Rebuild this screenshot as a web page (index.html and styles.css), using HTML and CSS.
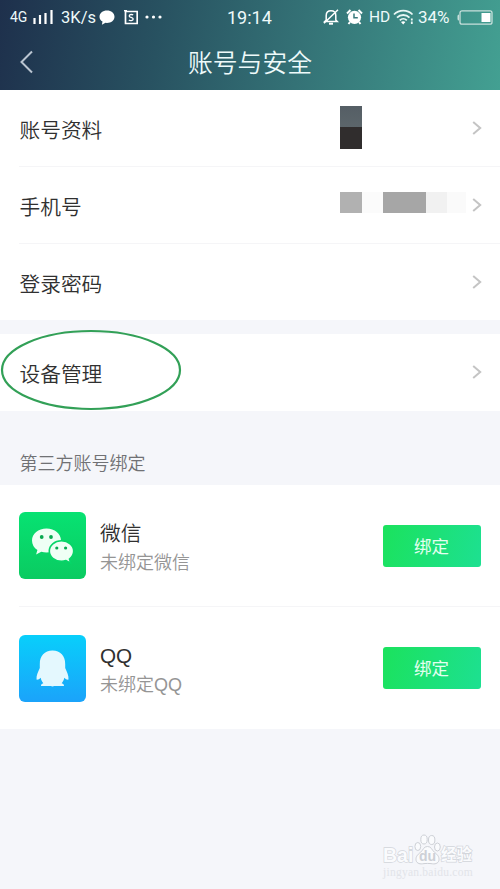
FILE: index.html
```html
<!DOCTYPE html>
<html lang="zh-CN">
<head>
<meta charset="utf-8">
<title>账号与安全</title>
<link rel="stylesheet" href="styles.css">
</head>
<body>
<header class="header">
  <div class="status">
    <span class="net">4G</span>
    <svg class="signal" width="20" height="16" viewBox="0 0 20 16"><path d="M1.500 15V9M7 15V6M12.500 15V4M18.500 15V1" stroke="#fff" stroke-width="2.200"/></svg>
    <span class="speed">3K/s</span>
    <svg class="bubble" width="16" height="15" viewBox="0 0 16 15"><path d="M8 .5c4.300 0 7.500 2.700 7.500 6.200s-3.200 6.200-7.500 6.200l-1.500-.1-3.600 2 .6-3.200C1.600 10.500.5 8.700.5 6.700.5 3.200 3.700.5 8 .5z" fill="#fff"/></svg>
    <svg class="sbox" width="14" height="15" viewBox="0 0 14 15" fill="none" stroke="#fff"><path d="M1.500 1.500h11.700v12H1.500z" stroke-width="1.700"/><path d="M0 .7h3" stroke-width="1.400"/><path d="M9.100 5.100C8.500 4.300 5.200 4 5.200 6c0 1.800 4 1.100 4 3 0 2-3.500 1.800-4.300.8" stroke-width="1.300"/></svg>
    <svg class="dots" width="17" height="4" viewBox="0 0 17 4" fill="#fff"><circle cx="2" cy="2" r="1.600"/><circle cx="8.500" cy="2" r="1.600"/><circle cx="15" cy="2" r="1.600"/></svg>
    <span class="time">19:14</span>
    <svg class="bell" width="16" height="16" viewBox="0 0 16 16" fill="none" stroke="#fff" stroke-width="1.500"><path d="M3.200 11V6.500C3.200 3.200 5 1.700 8 1.700s4.800 1.500 4.800 4.800V11l1.500 1.500H1.700L3.200 11zM15 .8L1 14.300"/><path d="M6 14.700h4" stroke-width="2"/></svg>
    <svg class="alarm" width="17" height="16" viewBox="0 0 17 16"><circle cx="8.500" cy="8.300" r="6.600" fill="#fff"/><path d="M1 4.500L4.500 1M12.500 1L16 4.500M4 13l-1.500 2M13 13l1.500 2" stroke="#fff" stroke-width="2"/><path d="M8 4.500v4.300h3.800" fill="none" stroke="#397a7c" stroke-width="1.500"/></svg>
    <span class="hd">HD</span>
    <svg class="wifi" width="21" height="16" viewBox="0 0 21 16" fill="none" stroke="#e9f7f5" stroke-width="1.800"><path d="M1 5.500c5-5.200 13.500-5.200 18.500 0M4 8.600c3.500-3.500 9-3.500 12.500 0M6.800 11.400c2-2 5-2 7 0"/><path d="M8 13l2.200 2.400 2.200-2.400c-1.300-1-3.100-1-4.400 0z" fill="#fff" stroke="none"/><path d="M18.800 9.500v2M18.800 12.500v2.500" stroke-width="1.800"/></svg>
    <span class="percent">34%</span>
    <svg class="battery" width="36" height="15" viewBox="0 0 36 15"><rect x="3" y=".8" width="32" height="13.400" rx="2" fill="none" stroke="#c7dfdb" stroke-width="1.300"/><path d="M2 4.500Q.5 4.500.5 6v3q0 1.500 1.500 1.500z" fill="#c7dfdb"/><path d="M24.500 3h9v9h-9z" fill="#fff"/></svg>
  </div>
  <div class="navbar">
    <svg width="14" height="24" viewBox="0 0 14 24"><path d="M12 1.500L1.500 12 12 22.500" fill="none" stroke="#bac5d1" stroke-width="2"/></svg>
    <h1>账号与安全</h1>
  </div>
</header>
<main>
  <section class="group">
    <div class="row"><span>账号资料</span><i class="avatar"></i><svg class="arrow" viewBox="0 0 10 14"><path d="M1.200 1l7 6-7 6"/></svg></div>
    <div class="row"><span>手机号</span><div class="mask"><i class="m1"></i><i class="m2"></i><i class="m3"></i><i class="m4"></i><i class="m5"></i></div><svg class="arrow" viewBox="0 0 10 14"><path d="M1.200 1l7 6-7 6"/></svg></div>
    <div class="row last"><span>登录密码</span><svg class="arrow" viewBox="0 0 10 14"><path d="M1.200 1l7 6-7 6"/></svg></div>
  </section>
  <section class="group device">
    <div class="row last"><span>设备管理</span><svg class="arrow" viewBox="0 0 10 14"><path d="M1.200 1l7 6-7 6"/></svg></div>
    <svg class="ring" width="182" height="82" viewBox="0 0 182 82"><ellipse cx="91" cy="41" rx="89" ry="39" fill="none" stroke="#32a057" stroke-width="2.200"/></svg>
  </section>
  <h2>第三方账号绑定</h2>
  <section class="group">
    <div class="account">
      <svg class="app" width="67" height="67" viewBox="0 0 67 67">
        <defs><linearGradient id="wx" x2="0" y2="1"><stop stop-color="#07e272"/><stop offset="1" stop-color="#0acb61"/></linearGradient></defs>
        <rect width="67" height="67" rx="6" fill="url(#wx)"/>
        <path d="M27.500 16.500c-8.200 0-14.500 5.300-14.500 12 0 4 2 7.300 5.400 9.500l-1.300 4.400 5.200-2.700c1.700.5 3.400.8 5.200.8 8.200 0 14.500-5.300 14.500-12s-6.300-12-14.500-12z" fill="#effff5"/>
        <path d="M42.500 28.800c-7 0-12.200 4.600-12.200 10.300s5.200 10.200 12.200 10.200c1.600 0 3.100-.2 4.500-.7l4.700 2.500-1.200-4c2.600-1.900 4.200-4.700 4.200-8 0-5.700-5.300-10.300-12.200-10.300z" fill="#effff5" stroke="#07d568" stroke-width="1.600"/>
        <g fill="#08a950"><circle cx="22.700" cy="25" r="1.900"/><circle cx="32" cy="25" r="1.900"/><circle cx="37.800" cy="36" r="1.600"/><circle cx="46.600" cy="36" r="1.600"/></g>
      </svg>
      <div class="info"><strong>微信</strong><span>未绑定微信</span></div><button>绑定</button>
    </div>
    <div class="account last">
      <svg class="app" width="67" height="67" viewBox="0 0 67 67">
        <defs><linearGradient id="qq" x2="0" y2="1"><stop stop-color="#08cffb"/><stop offset="1" stop-color="#1ba3fa"/></linearGradient></defs>
        <rect width="67" height="67" rx="6" fill="url(#qq)"/>
        <path d="M33.500 15.500C25.500 15.500 20.800 21 20.800 29v4c-1.800 4-3.600 7.500-3.300 11.600 1.600.2 3-.6 4.200-1.900.5 2.300 1.300 4.100 2.600 5.500-1.700.6-2.300 1.400-2.300 2.800h9.800l1.700.6 1.700-.6H45c0-1.400-.6-2.200-2.300-2.800 1.300-1.400 2.100-3.200 2.600-5.500 1.200 1.300 2.600 2.100 4.200 1.900.3-4.100-1.500-7.600-3.300-11.600v-4c0-8-4.700-13.500-12.700-13.500z" fill="#e4f8fe"/>
      </svg>
      <div class="info"><strong>QQ</strong><span>未绑定QQ</span></div><button>绑定</button>
    </div>
  </section>
</main>
<footer class="watermark">
  <div class="brand"><span class="bai">Bai</span>
    <svg width="27" height="31" viewBox="0 0 27 31"><g fill="#fafbfd" stroke="#cdd0d6"><ellipse cx="3.800" cy="12.500" rx="2.900" ry="4"/><ellipse cx="10" cy="5.500" rx="3.200" ry="4.500"/><ellipse cx="17.700" cy="6" rx="3.200" ry="4.500"/><ellipse cx="23.400" cy="13" rx="2.900" ry="4"/><path d="M13.500 12.500c-4 0-4 3.300-7 5.800-3.500 2.800-4.500 4.500-4.500 7 0 3.500 3 5 6.500 4.500 3.300-.5 6.700-.5 10 0 3.500.5 6.500-1 6.500-4.500 0-2.500-1-4.200-4.500-7-3-2.500-3-5.800-7-5.800z"/></g><text x="13.500" y="27" text-anchor="middle">du</text></svg>
    <span class="cn">经验</span></div>
  <div class="url">jingyan.baidu.com</div>
</footer>
</body>
</html>
```

FILE: styles.css
```css
* { box-sizing: border-box; }
body {
  margin: 0;
  height: 889px;
  overflow: hidden;
  position: relative;
  background: #f5f6fa;
  color: #303030;
  font-family: Roboto, "Noto Sans CJK SC", sans-serif;
}
svg { flex: none; display: block; }
.header {
  height: 90px;
  background: linear-gradient(100deg, #1e304c 0%, #285261 32%, #347276 60%, #43a092 100%);
  color: #eefafa;
}
.status {
  height: 34px;
  display: flex;
  align-items: center;
  padding-left: 10px;
  white-space: nowrap;
  line-height: 20px;
}
.status > * { flex: none; }
.net { width: 23px; font-size: 14px; }
.speed { width: 35px; margin-left: 8px; font-size: 16.500px; padding-top: 1px; }
.bubble { margin-left: 3px; }
.sbox { margin-left: 9px; }
.dots { margin-left: 7px; }
.time { width: 46px; margin-left: 65px; font-size: 18px; padding-top: 1px; }
.bell { margin-left: 50px; }
.alarm { margin-left: 7px; }
.hd { width: 23px; margin-left: 6px; font-size: 15.500px; }
.wifi { margin-left: 1px; }
.percent { width: 34px; margin-left: 4px; font-size: 17px; }
.battery { margin-left: 5px; }
.navbar {
  height: 56px;
  display: grid;
  grid-template-columns: 40px 1fr 40px;
  align-items: center;
  padding: 0 20px;
}
h1 { margin: 4px 0 0; text-align: center; font-size: 24.800px; font-weight: 350; line-height: 36px; }
.group { background: #fff; }
.row {
  height: 77px;
  display: flex;
  align-items: center;
  padding-right: 18px;
  margin-left: 19px;
  border-bottom: 1px solid #f5f5f7;
  font-size: 20.700px;
  font-weight: 350;
}
.row > span { flex: 1; line-height: 30px; padding: 5px 0 0 .5px; }
.row.last { height: 76px; border-bottom: 0; }
.arrow { width: 10px; height: 14px; fill: none; stroke: #c4c4c4; stroke-width: 2; }
.avatar {
  width: 22px;
  height: 43px;
  margin: -1px 110px 0 0;
  background: linear-gradient(#555e65 0, #5c666b 50%, #302d2d 50%, #302d2d 100%);
}
.mask { display: flex; height: 21px; width: 132px; margin-top: -6px; }
.m1 { width: 22px; background: #b1b1b1; }
.m2 { width: 21px; background: #fbfbfb; }
.m3 { width: 43px; background: #a6a6a6; }
.m4 { width: 21px; background: #f1f1f1; }
.m5 { width: 19px; background: #fafafa; }
.device { position: relative; height: 77px; margin-top: 14px; }
.ring { position: absolute; left: 0; top: -5px; }
h2 {
  height: 74px;
  margin: 0;
  padding: 39px 0 0 19.500px;
  color: #707174;
  font-size: 18px;
  font-weight: 350;
  line-height: 28px;
}
.account {
  height: 122px;
  margin-left: 19px;
  padding-right: 19.500px;
  display: flex;
  align-items: center;
  border-bottom: 1px solid #f5f5f7;
}
.account.last { border: 0; }
.info {
  flex: 1;
  padding: 4px 0 0 14px;
  display: flex;
  flex-direction: column;
  font-family: "Liberation Sans", "Noto Sans CJK SC", sans-serif;
}
.info strong { font-size: 20.700px; line-height: 30px; font-weight: 350; }
.info span { color: #959595; font-size: 18px; line-height: 28px; font-weight: 350; }
button {
  width: 98px;
  height: 42px;
  padding: 0 0 1px;
  border: 0;
  border-radius: 3px;
  background: linear-gradient(105deg, #1be25d, #1de091);
  color: #e4fff0;
  font: 400 17.500px "Noto Sans CJK SC", sans-serif;
}
.watermark {
  position: absolute;
  left: 383px;
  top: 834px;
  width: 92px;
  color: #fafbfd;
  font-family: "Liberation Sans", "Noto Sans CJK SC", sans-serif;
}
.brand {
  display: flex;
  align-items: flex-end;
  height: 31px;
  font-size: 19.500px;
  font-weight: 700;
  line-height: 20px;
  -webkit-text-stroke: 1.300px #d2d5db;
  paint-order: stroke fill;
}
.brand > span { flex: none; width: 31px; }
.brand .cn { width: 32px; font-size: 15.500px; white-space: nowrap; }
.brand svg { paint-order: normal; -webkit-text-stroke: 0; }
.brand text { font-size: 14px; font-weight: 700; fill: #cdd0d6; }
.url {
  color: #e2e4e9;
  font: 400 11.500px/14px "Liberation Serif", serif;
  letter-spacing: .25px;
}
```
